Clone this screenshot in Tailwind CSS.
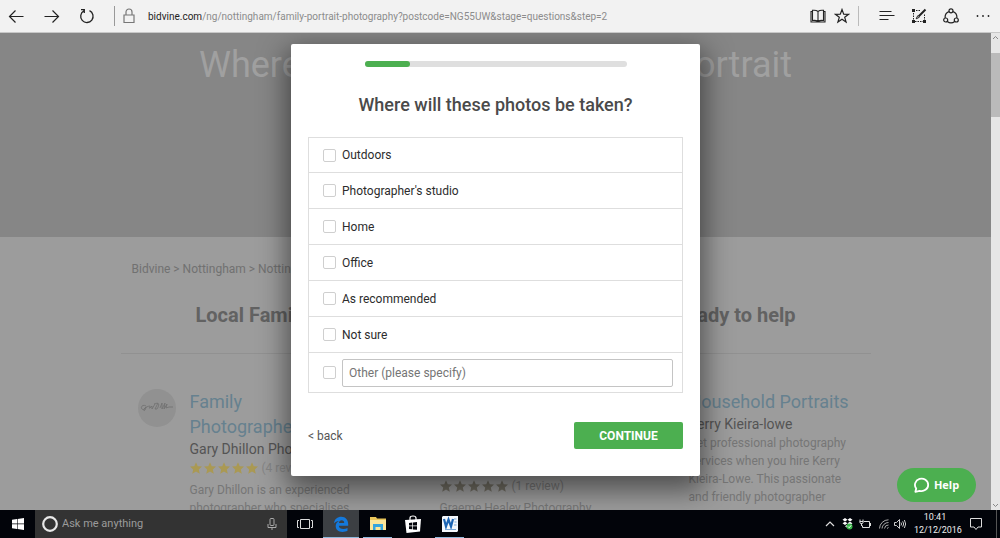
<!DOCTYPE html>
<html lang="en">
<head>
<meta charset="utf-8">
<meta name="viewport" content="width=device-width, initial-scale=1">
<title>Bidvine</title>
<script src="https://cdn.jsdelivr.net/npm/@tailwindcss/browser@4"></script>
</head>
<body class="flex h-screen flex-col overflow-hidden bg-[#9c9c9c] font-['Roboto',sans-serif]">
<svg class="hidden">
  <symbol id="star" viewBox="0 0 24 24"><path d="M12 .5l3.500 7.900 8.500.8-6.400 5.700 1.900 8.400L12 19l-7.500 4.300 1.900-8.400L0 9.200l8.500-.8z"/></symbol>
</svg>

<!-- Browser toolbar -->
<header class="flex h-[33px] shrink-0 items-center border-b border-[#c8c8c8] bg-[#f2f2f2] pr-[9px] pl-2 text-[#222]">
  <button aria-label="Back" class="w-[35px]"><svg class="size-4" viewBox="0 0 16 16" fill="none" stroke="currentColor" stroke-width="1.2"><path d="M15.500 8.500H1.500M7.500 2.500L1.500 8.500l6 6"/></svg></button>
  <button aria-label="Forward" class="w-[35px] pl-px"><svg class="size-4" viewBox="0 0 16 16" fill="none" stroke="currentColor" stroke-width="1.2"><path d="M.5 8.500h14M8.500 2.500l6 6-6 6"/></svg></button>
  <button aria-label="Refresh" class="w-9 pl-px"><svg class="size-4" viewBox="0 0 16 16" fill="none" stroke="currentColor" stroke-width="1.3"><path d="M10.500 2.700a6.200 6.200 0 1 1-5.600.2M2 1.600h3.300v3.500"/></svg></button>
  <span class="h-5 w-px bg-[#999]"></span>
  <svg class="mx-2 h-4 w-3" viewBox="0 0 12 16" fill="none" stroke="#777" stroke-width="1.2"><path d="M1 7h10v7.500H1zM3 7V4a3 3 0 0 1 6 0v3"/></svg>
  <p class="ml-[5px] flex-1 truncate text-[10px] text-[#8c8c8c]"><span class="text-[#222]">bidvine.com</span>/ng/nottingham/family-portrait-photography?postcode=NG55UW&amp;stage=questions&amp;step=2</p>
  <button aria-label="Reading view"><svg class="h-4 w-4" viewBox="0 0 16 16" fill="none" stroke="currentColor" stroke-width="1.100"><path d="M8 3.500C6.500 2.200 4.500 2 2.500 2.300v10.200c2-.3 4-.1 5.500 1 1.500-1.100 3.500-1.300 5.500-1V2.300c-2-.3-4-.1-5.500 1.200zM8 3.500v10M2.500 3.500H1v10.500h14V3.500h-1.500"/></svg></button>
  <button aria-label="Add to favourites" class="ml-2"><svg class="size-4" viewBox="0 0 16 16" fill="none" stroke="currentColor" stroke-width="1.200"><path d="M8 1.500l1.700 4.600 4.900.2-3.900 3 1.400 4.800L8 11.300l-4.100 2.800 1.400-4.800-3.900-3 4.900-.2z"/></svg></button>
  <span class="ml-2 h-5 w-px bg-[#bbb]"></span>
  <button aria-label="Hub" class="ml-5"><svg class="size-4" viewBox="0 0 16 16" fill="none" stroke="currentColor" stroke-width="1.100"><path d="M.5 3.500h12M.5 7.500h15M.5 11.500h9"/></svg></button>
  <button aria-label="Make a web note" class="ml-4"><svg class="size-4" viewBox="0 0 16 16" fill="none" stroke="currentColor"><path stroke-dasharray="1.500 1" d="M2.500 2.500h7M2.500 2.500v11h11v-7"/><path stroke-width="2" d="M14.500 1.500L7.500 8.500"/><path d="M6.800 7.500l-1.600 3.300 3.300-1.600"/><path fill="currentColor" stroke="none" d="M1 1h3v3H1zM1 12h3v3H1zM12 12h3v3h-3z"/></svg></button>
  <button aria-label="Share" class="ml-4"><svg class="size-4" viewBox="0 0 16 16" fill="none" stroke="currentColor" stroke-width="1.200"><circle cx="8" cy="2.800" r="2"/><circle cx="2.700" cy="12" r="2"/><circle cx="13.300" cy="12" r="2"/><path d="M6 3.600A6 6 0 0 0 2.200 10M10 3.600a6 6 0 0 1 3.800 6.400M4.300 13.500a6.200 6.200 0 0 0 7.400 0"/></svg></button>
  <button aria-label="More" class="ml-4"><svg class="size-4" viewBox="0 0 16 16" fill="currentColor"><circle cx="2.500" cy="8" r=".9"/><circle cx="8" cy="8" r=".9"/><circle cx="13.500" cy="8" r=".9"/></svg></button>
</header>

<div class="flex min-h-0 flex-1">
  <div class="relative min-w-0 flex-1 overflow-hidden">
    <main class="text-[#747474]">
      <section class="h-[204px] bg-[#868686] px-[199px] pt-3">
        <h1 class="flex justify-between text-4xl leading-10 text-[#a0a0a0]"><span>Where</span><span>portrait</span></h1>
      </section>
      <div class="mx-auto w-[750px] max-w-full">
        <nav class="px-[11px] pt-6 text-xs leading-4 text-[#717171]">Bidvine &gt; Nottingham &gt; Nottingham</nav>
        <h2 class="mt-6 flex justify-between border-b border-[#919191] px-[75px] pb-6 text-xl leading-[28px] font-bold text-[#626262]"><span>Local Family</span><span>ready to help</span></h2>
        <div class="grid grid-cols-3 pt-[35px] text-xs leading-[18px]">
          <article class="flex gap-[14px] pl-[17px]">
            <svg class="size-[38px] shrink-0" viewBox="0 0 38 38"><circle cx="19" cy="19" r="19" fill="#919191"/><path d="M8 17c-3-2-6 1-4 3s4-2 4-2c-1 5-3 4-2 2s5-3 6-3-2 3 0 2l2-2v3l3-5M16 15c5-2 6 0 3 5h-2l3-6M22 19l2-5v6l3-6-1 6 3-5-1 4 3-1h4" fill="none" stroke="#707070" stroke-width=".8"/></svg>
            <div class="w-[176px]">
              <h3 class="w-[140px] text-lg leading-[25px] text-[#66818f]">Family Photographer</h3>
              <p class="text-sm leading-[20px] text-[#545454]">Gary Dhillon Photo</p>
              <p class="flex items-center text-[#858585]"><span class="mr-1 flex gap-[2px] text-[#aa9953]"><svg class="size-3 fill-current"><use href="#star"/></svg><svg class="size-3 fill-current"><use href="#star"/></svg><svg class="size-3 fill-current"><use href="#star"/></svg><svg class="size-3 fill-current"><use href="#star"/></svg><svg class="size-3 fill-current"><use href="#star"/></svg></span>(4 reviews)</p>
              <p class="mt-1 text-[#767676]">Gary Dhillon is an experienced photographer who specialises</p>
            </div>
          </article>
          <article class="pt-[88px] pl-[69px] text-[#767676]">
            <p class="flex items-center"><span class="mr-1 flex gap-[2px] text-[#706d62]"><svg class="size-3 fill-current"><use href="#star"/></svg><svg class="size-3 fill-current"><use href="#star"/></svg><svg class="size-3 fill-current"><use href="#star"/></svg><svg class="size-3 fill-current"><use href="#star"/></svg><svg class="size-3 fill-current"><use href="#star"/></svg></span>(1 review)</p>
            <p class="mt-1">Graeme Healey Photography</p>
          </article>
          <article class="pl-[68px]">
            <h3 class="text-lg leading-[25px] text-[#66818f]">Household Portraits</h3>
            <p class="text-sm leading-[20px] text-[#545454]">Kerry Kieira-lowe</p>
            <p class="w-[170px] text-[#767676]">Get professional photography services when you hire Kerry Kieira-Lowe. This passionate and friendly photographer</p>
          </article>
        </div>
      </div>
    </main>

    <!-- Question dialog -->
    <div class="absolute inset-0 flex items-start justify-center pt-[11px]">
      <form role="dialog" aria-labelledby="question" class="w-[409px] rounded-xs bg-white px-[17px] pt-[17px] pb-[27px] shadow-[0_10px_28px_4px_rgba(0,0,0,0.5)]">
        <div role="progressbar" aria-label="Progress" aria-valuenow="17" class="mx-auto h-[6px] w-[262px] rounded-full bg-[#dfdfdf]"><div class="h-full w-[45px] rounded-full bg-[#4caf50]"></div></div>
        <h2 id="question" class="mt-[25px] text-center text-lg leading-[26px] font-medium text-[#4a4a4a]">Where will these photos be taken?</h2>
        <div class="mt-[19px] divide-y divide-[#dedede] border border-[#dedede] text-xs text-[#2c2c2c]">
          <label class="flex h-[35px] items-center gap-[6px] px-[14px]"><input type="checkbox" class="size-[13px] appearance-none rounded-xs border border-[#cfcfcf] bg-white">Outdoors</label>
          <label class="flex h-9 items-center gap-[6px] px-[14px]"><input type="checkbox" class="size-[13px] appearance-none rounded-xs border border-[#cfcfcf] bg-white">Photographer's studio</label>
          <label class="flex h-9 items-center gap-[6px] px-[14px]"><input type="checkbox" class="size-[13px] appearance-none rounded-xs border border-[#cfcfcf] bg-white">Home</label>
          <label class="flex h-9 items-center gap-[6px] px-[14px]"><input type="checkbox" class="size-[13px] appearance-none rounded-xs border border-[#cfcfcf] bg-white">Office</label>
          <label class="flex h-9 items-center gap-[6px] px-[14px]"><input type="checkbox" class="size-[13px] appearance-none rounded-xs border border-[#cfcfcf] bg-white">As recommended</label>
          <label class="flex h-9 items-center gap-[6px] px-[14px]"><input type="checkbox" class="size-[13px] appearance-none rounded-xs border border-[#cfcfcf] bg-white">Not sure</label>
          <div class="flex h-[39px] items-center gap-[6px] pr-[9px] pl-[14px]"><input type="checkbox" aria-label="Other" class="size-[13px] shrink-0 appearance-none rounded-xs border border-[#cfcfcf] bg-white"><input type="text" aria-label="Other (please specify)" placeholder="Other (please specify)" class="h-7 min-w-0 flex-1 rounded-xs border border-[#c4c4c4] px-[6px] text-xs placeholder:text-[#757575]"></div>
        </div>
        <div class="mt-[29px] flex items-center justify-between">
          <a href="#" class="text-xs text-[#555]">&lt; back</a>
          <button type="button" class="h-[27px] w-[109px] rounded-xs bg-[#4caf50] text-xs font-bold text-white">CONTINUE</button>
        </div>
      </form>
    </div>

    <button class="absolute right-[15px] bottom-2 flex h-[34px] w-[79px] items-center justify-center gap-1 rounded-full bg-[#4caf50] font-['Open_Sans',sans-serif] text-[11px] font-bold text-white">
      <svg class="size-4" viewBox="0 0 16 16" fill="none" stroke="currentColor" stroke-width="1.800"><path d="M1.400 14.800l.8-3.300A6.600 6.200 0 1 1 5.600 13.800z" stroke-linejoin="round"/></svg>Help
    </button>
  </div>

  <!-- Page scrollbar -->
  <div class="flex w-[9px] shrink-0 flex-col items-center bg-[#e6e6e6]">
    <svg class="h-[20px] w-[7px] shrink-0 pb-3" viewBox="0 0 7 8" fill="none" stroke="#888"><path d="M1 6l2.500-2.500L6 6"/></svg>
    <div class="h-16 w-full bg-[#bababa]"></div>
    <svg class="mt-auto h-2 w-[7px] shrink-0" viewBox="0 0 7 8" fill="none" stroke="#888"><path d="M1 2l2.500 2.500L6 2"/></svg>
  </div>
</div>

<!-- Taskbar -->
<footer class="flex h-7 shrink-0 items-stretch bg-[#02040a] text-[#ddd]">
  <button aria-label="Start" class="flex w-[35px] items-center justify-center"><svg class="size-3 fill-white" viewBox="0 0 12 12"><path d="M0 1.700l5-.7v4.600H0zM5.600.9L12 0v5.600H5.600zM0 6.300h5v4.700l-5-.7zM5.600 6.300H12V12l-6.400-.9z"/></svg></button>
  <label class="flex w-[252px] items-center bg-[#333] pr-[10px] pl-[7px]">
    <svg class="size-4" viewBox="0 0 16 16"><circle cx="8" cy="8" r="6.800" fill="none" stroke="#e8e8e8" stroke-width="2.200"/></svg>
    <input type="text" aria-label="Search" placeholder="Ask me anything" class="min-w-0 flex-1 bg-transparent pl-1 text-[11px] placeholder:text-[#9b9b9b]">
    <svg class="h-3 w-[10px]" viewBox="0 0 10 12" fill="none" stroke="#aaa"><rect x="3" y=".5" width="4" height="7" rx="1"/><path d="M1 6v3.500h8V6M5 9.500V12"/></svg>
  </label>
  <button aria-label="Task view" class="flex w-[36px] items-center justify-center"><svg class="h-3 w-4" viewBox="0 0 16 12" fill="none" stroke="#ddd"><path d="M3.500 1.500h9v9h-9zM2 2.500H.5v7H2M14 2.500h1.500v7H14"/></svg></button>
  <button aria-label="Edge" class="flex w-9 items-center justify-center border-b border-[#8fb9dc] bg-[#3c3f43]"><svg class="size-4 fill-[#1479dc]" viewBox="0 0 16 16"><path d="M1 7.500C1.500 3 4.500.8 8.300.8c4.400 0 6.900 3.200 6.900 7.500v1.400H5.800c.2 2.300 2.200 3.300 4.500 3.300 1.600 0 3-.4 4.200-1.100v2.900c-1.300.7-3 1.100-5 1.100C5.300 15.900 2.700 13.500 2.700 10c0-2.300 1.200-4.100 3.300-5.100C3.800 5.200 2.200 6 1 7.500zM6 7h5.200c0-1.700-.9-2.700-2.500-2.700S6.200 5.400 6 7z"/></svg></button>
  <button aria-label="File Explorer" class="mx-1 flex w-[29px] items-center justify-center border-b border-[#8fb9dc]"><svg class="h-[15px] w-4" viewBox="0 0 16 15"><path fill="#e9c65b" d="M0 1h6l1 1.500h9V14H0z"/><path fill="#fbe69b" d="M0 4h16v10H0z"/><path fill="#36a5de" d="M3 8h10v6h-2.500v-3h-5v3H3z"/></svg></button>
  <button aria-label="Store" class="mr-[6px] flex w-[33px] items-center justify-center"><svg class="h-[18px] w-4" viewBox="0 0 16 18"><path d="M5 5V3a3 2 0 0 1 6 0v2" fill="none" stroke="#fff" stroke-width="1.200"/><path fill="#fff" d="M0 5l16-1-1 12.500L1.500 18z"/><path fill="#02040a" d="M4 8l3.300-.4v3H4zM8 7.500l4-.5v3.600H8zM4 11.300h3.300v3L4 14zM8 11.300h4v3.500l-4-.4z"/></svg></button>
  <button aria-label="Word" class="flex w-[29px] items-center justify-center border-b border-[#8fb9dc]"><svg class="size-4" viewBox="0 0 16 16"><path fill="#f4f8fc" d="M1 0h15v15l-1 1H0V1z"/><path d="M2 3l2 7.500 2.500-7 2.500 7L11 3" fill="none" stroke="#1d66b5" stroke-width="2.200"/><path d="M12 3h2.500M12.500 6h2M12 9h2.500M3 13.500h11" stroke="#7aa9d8"/></svg></button>
  <div class="ml-auto flex items-center">
    <svg class="h-2 w-[10px]" viewBox="0 0 10 8" fill="none" stroke="#ddd" stroke-width="1.200"><path d="M1 6l4-4 4 4"/></svg>
    <svg class="ml-[7px] h-3 w-[11px]" viewBox="0 0 11 12"><path fill="#fff" d="M3 0l2.500 1.700L3 3.400.5 1.700zM8 0l2.500 1.700L8 3.400 5.500 1.700zM3 3.700l2.500 1.600L3 7 .5 5.300zM8 3.700l2.500 1.600L8 7 5.500 5.300zM5.500 6.500L8 8.200 5.500 10 3 8.200z"/><circle cx="7.500" cy="8.500" r="3" fill="#38b549"/><path d="M6 8.500l1.200 1.200L9.200 7.300" fill="none" stroke="#fff"/></svg>
    <svg class="ml-[6px] h-[10px] w-3" viewBox="0 0 12 10" fill="none" stroke="#ddd"><path d="M5 2.500h5.500v6H3.500V6.500M11.500 4v3M1 .5v2h3v-2M.5 2.500l1 2h2l1-2M2.500 4.500V7"/></svg>
    <svg class="ml-2 size-[10px]" viewBox="0 0 10 10" fill="none" stroke="#aaa"><path d="M.5 9.500A9 9 0 0 1 9.500.8M3 9.500a6.500 6.500 0 0 1 6.500-6M5.500 9.500a4 4 0 0 1 4-3.500M8 9.500l1.500-1"/></svg>
    <svg class="ml-[5px] h-[10px] w-3" viewBox="0 0 12 10" fill="none" stroke="#ccc"><path d="M.5 3.500h2l3-3v9l-3-3h-2zM7 3.500q1 1.500 0 3M8.700 2.300q2 2.700 0 5.400M10.400 1q2.500 4 0 8"/></svg>
    <p class="ml-2 w-[42px] text-center text-[9px] leading-[13px] whitespace-nowrap text-[#eee]"><time>10:41<br>12/12/2016</time></p>
    <svg class="ml-[14px] size-3" viewBox="0 0 12 12" fill="none" stroke="#ddd"><path d="M.5.5h11v8.500H8l-2 2.500L4 9H.5z"/></svg>
    <span class="ml-[14px] h-7 w-1 border-l border-[#555]"></span>
  </div>
</footer>
</body>
</html>
